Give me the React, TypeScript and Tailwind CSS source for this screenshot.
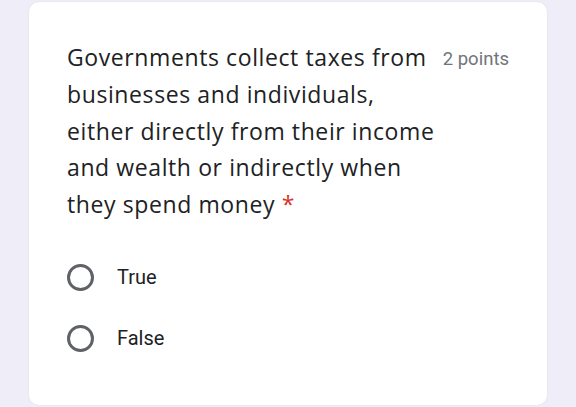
import { type JSX } from "react"

const lines = [
  "Governments collect taxes from",
  "businesses and individuals,",
  "either directly from their income",
  "and wealth or indirectly when",
]

function Radio({ label }: { label: string }): JSX.Element {
  return (
    <label className="flex h-[61px] items-center">
      <span className="h-[27px] w-[27px] rounded-full border-[3px] border-[#5f6368]" />
      <span className="ml-[23px] text-[20px] text-[#202124]">{label}</span>
    </label>
  )
}

export default function App(): JSX.Element {
  return (
    <div className="h-[407px] w-[576px] overflow-hidden bg-[#efedf7] pl-[29px] pt-[2px] font-['Roboto',sans-serif]">
      <div className="h-[403px] w-[518px] rounded-[10px] bg-white pl-[38px] pr-[38px] pt-[37px] shadow-[0_0_2px_rgba(0,0,0,0.08)]">
        <div className="flex items-start justify-between">
          <div className="font-['Open_Sans',sans-serif] text-[23px] leading-[36.8px] tracking-[0.6px] text-[#202124]">
            {lines.map(l => (
              <div key={l}>{l}</div>
            ))}
            <div>
              they spend money <span className="text-[#d93025]">*</span>
            </div>
          </div>
          <div className="mt-[7px] text-[18.5px] text-[#70757a]">2 points</div>
        </div>
        <div className="mt-[24px] flex flex-col">
          <Radio label="True" />
          <Radio label="False" />
        </div>
      </div>
    </div>
  )
}
